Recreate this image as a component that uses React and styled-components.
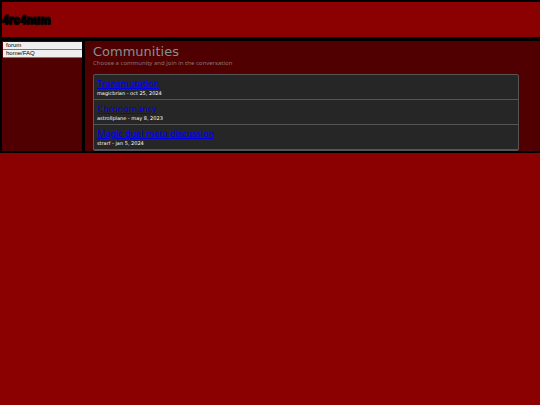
import React from "react";
import styled, { createGlobalStyle } from "styled-components";

const GlobalStyle = createGlobalStyle`
  * { box-sizing: border-box; }
  body {
    margin: 0;
    background: #8b0000;
    font-family: "DejaVu Sans", Verdana, sans-serif;
  }
  h1, h2, p, ul { margin: 0; padding: 0; }
`;

const Frame = styled.div`
  background: #000;
  padding: 2px 0 2px 2px;
`;

const Header = styled.header`
  display: flex;
  align-items: center;
  height: 35px;
  background: #8b0000;
`;

const Logo = styled.h1`
  font: 900 12px/16px Impact, Roboto, sans-serif;
  color: #000;
  -webkit-text-stroke: 1px #000;
  text-shadow: 0 1px 1px #000;
`;

const Columns = styled.div`
  display: grid;
  grid-template-columns: 80px 1fr;
  gap: 3px;
  padding-top: 4px;
`;

const Sidebar = styled.nav`
  display: flex;
  flex-direction: column;
  background: #500000;
  padding: 1px 0 0 1px;
`;

const NavButton = styled.button`
  height: 8px;
  padding: 0 3px;
  border: 1px solid #777;
  border-width: 0 0 1px;
  background: #efefef;
  color: #000;
  font: 6px/7px "Liberation Sans", Arial, sans-serif;
  text-align: left;
`;

const Main = styled.main`
  background: #500000;
  padding: 3px 21px 0 8px;
`;

const Title = styled.h2`
  font-size: 13px;
  font-weight: 400;
  line-height: 16px;
  color: #7c9494;
`;

const Intro = styled.p`
  font-family: "Noto Sans", sans-serif;
  font-size: 6px;
  line-height: 6px;
  color: #8c7474;
`;

const List = styled.ul`
  margin-top: 8px;
  list-style: none;
  background: #262626;
  border: 1px solid #555;
  border-radius: 2px;
`;

const Item = styled.li`
  height: 25px;
  padding: 4px 3px 0;
  border-bottom: 1px solid #555;
`;

const TopicLink = styled.a`
  display: block;
  width: fit-content;
  font-family: "Noto Sans", sans-serif;
  font-size: 9px;
  line-height: 10px;
  color: #0000ee;
  text-decoration: underline;
`;

const Meta = styled.p`
  font-size: 5px;
  line-height: 8px;
  color: #fff;
`;

const topics = [
  { name: "Transmutation", meta: "magicbrian - oct 25, 2024" },
  { name: "Chronomancy", meta: "astrollplane - may 8, 2023" },
  { name: "Magic duel meta discussion", meta: "strarf - jan 5, 2024" },
];

export default function App() {
  return (
    <>
      <GlobalStyle />
      <Frame>
        <Header>
          <Logo>4rc4num</Logo>
        </Header>
        <Columns>
          <Sidebar>
            <NavButton type="button">forum</NavButton>
            <NavButton type="button">home/FAQ</NavButton>
          </Sidebar>
          <Main>
            <Title>Communities</Title>
            <Intro>Choose a community and join in the conversation</Intro>
            <List>
              {topics.map((topic) => (
                <Item key={topic.name}>
                  <TopicLink href="#">{topic.name}</TopicLink>
                  <Meta>{topic.meta}</Meta>
                </Item>
              ))}
            </List>
          </Main>
        </Columns>
      </Frame>
    </>
  );
}
